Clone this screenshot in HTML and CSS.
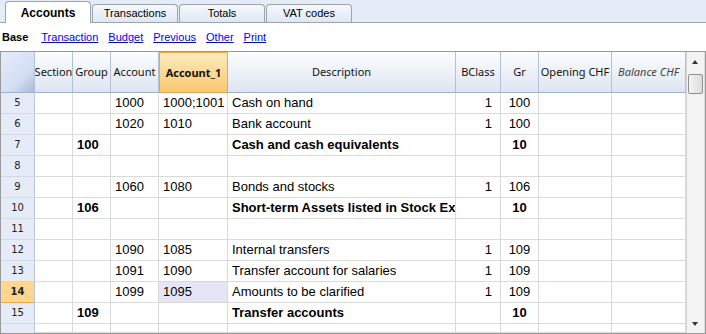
FILE: index.html
```html
<!DOCTYPE html>
<html lang="en">
<head>
  <meta charset="UTF-8">
  <title>Accounts</title>
  <link rel="stylesheet" href="styles.css">
</head>
<body>
  <nav class="tabs">
    <div class="tab active">Accounts</div>
    <div class="tab">Transactions</div>
    <div class="tab">Totals</div>
    <div class="tab">VAT codes</div>
  </nav>
  <div class="views">
    <b>Base</b>
    <a href="#">Transaction</a>
    <a href="#">Budget</a>
    <a href="#">Previous</a>
    <a href="#">Other</a>
    <a href="#">Print</a>
  </div>
  <div class="frame">
    <div class="grid">
      <div class="row head">
        <div class="corner"></div>
        <div>Section</div>
        <div>Group</div>
        <div>Account</div>
        <div class="cur">Account_1</div>
        <div>Description</div>
        <div>BClass</div>
        <div>Gr</div>
        <div>Opening CHF</div>
        <div class="calc">Balance CHF</div>
      </div>
      <div class="row">
        <div class="rh">5</div><div></div><div></div><div>1000</div><div>1000;1001</div><div>Cash on hand</div><div class="num">1</div><div class="ctr">100</div><div></div><div></div>
      </div>
      <div class="row">
        <div class="rh">6</div><div></div><div></div><div>1020</div><div>1010</div><div>Bank account</div><div class="num">1</div><div class="ctr">100</div><div></div><div></div>
      </div>
      <div class="row">
        <div class="rh">7</div><div></div><div class="b">100</div><div></div><div></div><div class="b">Cash and cash equivalents</div><div></div><div class="ctr b">10</div><div></div><div></div>
      </div>
      <div class="row">
        <div class="rh">8</div><div></div><div></div><div></div><div></div><div></div><div></div><div></div><div></div><div></div>
      </div>
      <div class="row">
        <div class="rh">9</div><div></div><div></div><div>1060</div><div>1080</div><div>Bonds and stocks</div><div class="num">1</div><div class="ctr">106</div><div></div><div></div>
      </div>
      <div class="row">
        <div class="rh">10</div><div></div><div class="b">106</div><div></div><div></div><div class="b">Short-term Assets listed in Stock Exchange</div><div></div><div class="ctr b">10</div><div></div><div></div>
      </div>
      <div class="row">
        <div class="rh">11</div><div></div><div></div><div></div><div></div><div></div><div></div><div></div><div></div><div></div>
      </div>
      <div class="row">
        <div class="rh">12</div><div></div><div></div><div>1090</div><div>1085</div><div>Internal transfers</div><div class="num">1</div><div class="ctr">109</div><div></div><div></div>
      </div>
      <div class="row">
        <div class="rh">13</div><div></div><div></div><div>1091</div><div>1090</div><div>Transfer account for salaries</div><div class="num">1</div><div class="ctr">109</div><div></div><div></div>
      </div>
      <div class="row">
        <div class="rh sel">14</div><div></div><div></div><div>1099</div><div class="focus">1095</div><div>Amounts to be clarified</div><div class="num">1</div><div class="ctr">109</div><div></div><div></div>
      </div>
      <div class="row">
        <div class="rh">15</div><div></div><div class="b">109</div><div></div><div></div><div class="b">Transfer accounts</div><div></div><div class="ctr b">10</div><div></div><div></div>
      </div>
      <div class="row">
        <div class="rh"></div><div></div><div></div><div></div><div></div><div></div><div></div><div></div><div></div><div></div>
      </div>
    </div>
    <div class="vscroll">
      <span class="up"></span>
      <span class="thumb"></span>
      <span class="down"></span>
    </div>
  </div>
</body>
</html>
```

FILE: styles.css
```css
body {
  margin: 0;
  font-family: "Liberation Sans", Arial, sans-serif;
  background: #fff;
  width: 706px;
  height: 334px;
  overflow: hidden;
}

.tabs {
  display: flex;
  align-items: flex-end;
  gap: 1px;
  height: 22px;
  padding-left: 5px;
  background: #e4ecf8;
  border-bottom: 1px solid #9ca4ad;
}
.tab {
  width: 84px;
  height: 17px;
  line-height: 17px;
  text-align: center;
  font-size: 11px;
  color: #000;
  border: 1px solid #9ca4ad;
  border-bottom: none;
  border-radius: 4px 4px 0 0;
  background: linear-gradient(#f6f9fd, #dde7f5);
}
.tab.active {
  height: 21px;
  line-height: 22px;
  margin-bottom: -1px;
  background: #fff;
  font-weight: bold;
  font-size: 12px;
}

.views {
  display: flex;
  align-items: center;
  gap: 10px;
  height: 28px;
  padding-left: 2px;
  font-size: 11px;
}
.views b {
  margin-right: 3px;
}
.views a {
  color: #0000ff;
}

.frame {
  display: flex;
  height: 281px;
  border: 1px solid #9a9a9a;
  box-shadow: inset -1px -1px 0 #dcdcdc;
  overflow: hidden;
}
.grid {
  flex: 0 0 685px;
}
.row {
  display: grid;
  grid-template-columns: 34px 38px 38px 48px 69px 228px 45px 38px 73px 74px;
  height: 21px;
  font-size: 13px;
}
.row > div {
  box-sizing: border-box;
  border-right: 1px solid #dadada;
  border-bottom: 1px solid #dadada;
  padding: 0 4px;
  line-height: 20px;
  white-space: nowrap;
  overflow: hidden;
}
.row .num {
  text-align: right;
  padding-right: 8px;
}
.row .ctr {
  text-align: center;
}
.row .b {
  font-weight: bold;
}
.row .rh {
  padding: 0;
  text-align: center;
  font-family: "DejaVu Sans", sans-serif;
  font-size: 10px;
  color: #222;
  background: #e6ecf7;
  border-right-color: #b9c6da;
  border-bottom-color: #d2dae7;
}
.row .rh.sel {
  font-weight: bold;
  background: #ffd68e;
  border-bottom-color: #f3a640;
}
.row .focus {
  background: #e5e5f5;
}

.row.head {
  height: 41px;
}
.row.head > div {
  display: flex;
  align-items: center;
  justify-content: center;
  padding: 0;
  font-family: "Noto Sans", sans-serif;
  font-size: 11px;
  color: #111;
  background: linear-gradient(#fcfdfe, #dee5f1);
  border-right-color: #b1c1d8;
  border-bottom-color: #9fb2cd;
}
.row.head .corner {
  background: linear-gradient(135deg, #e5ecfb 0%, #d4def4 65%, #a8b8d6 100%);
}
.row.head .cur {
  font-weight: bold;
  background: linear-gradient(#fdebbd, #f8c871);
  border: 1px solid #f1a540;
}
.row.head .calc {
  font-style: italic;
  color: #444;
}

.vscroll {
  position: relative;
  flex: 1;
  background: #f3f3f3;
  border-left: 1px solid #d6d6d6;
  margin-right: 1px;
}
.up,
.down {
  position: absolute;
  left: 5px;
  border-left: 3px solid transparent;
  border-right: 3px solid transparent;
}
.up {
  top: 8px;
  border-bottom: 4px solid #333;
}
.down {
  bottom: 7px;
  border-top: 4px solid #333;
}
.thumb {
  position: absolute;
  top: 22px;
  left: 1px;
  width: 13px;
  height: 18px;
  border: 1px solid #8f8f8f;
  border-radius: 2px;
  background: linear-gradient(90deg, #f4f4f4, #dcdcdc);
}
```
